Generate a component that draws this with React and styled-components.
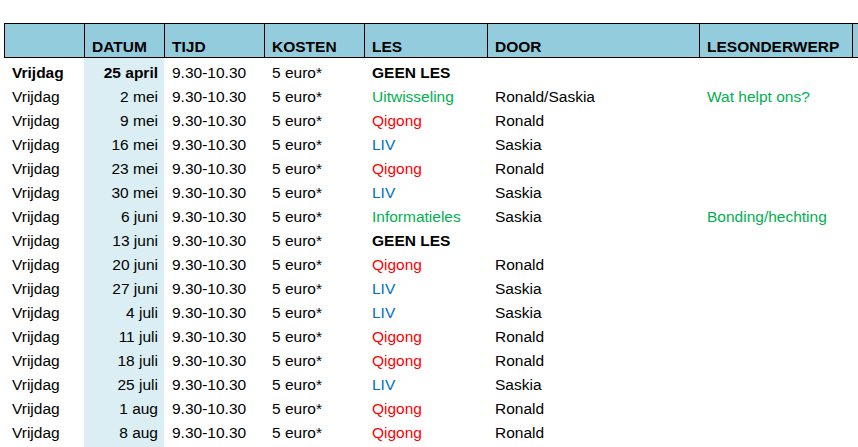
import React from "react";
import styled, { createGlobalStyle } from "styled-components";

const GlobalStyle = createGlobalStyle`
  body {
    margin: 0;
    background: #ffffff;
    font-family: "Liberation Sans", Arial, sans-serif;
    font-size: 15.5px;
    color: #000000;
  }
`;

const COLUMNS = "80px 80px 100px 100px 123px 212px 153px 1fr";

const colors = {
  green: "#00b050",
  red: "#ff0000",
  blue: "#0070c0",
};

const Sheet = styled.div`
  padding: 23px 0 0 4px;
  width: 858px;
  height: 447px;
  box-sizing: border-box;
  overflow: hidden;
`;

const HeaderRow = styled.div`
  display: grid;
  grid-template-columns: ${COLUMNS};
  height: 35px;
  box-sizing: border-box;
  border-top: 1px solid #000;
  border-bottom: 1px solid #000;
  background: #93cddd;
`;

const HeaderCell = styled.div`
  display: flex;
  align-items: flex-end;
  border-left: 1px solid #000;
  padding: 0 0 1px 7px;
  font-weight: bold;
  line-height: 18px;
  white-space: nowrap;
`;

const Row = styled.div`
  display: grid;
  grid-template-columns: ${COLUMNS};
  height: 24px;
`;

const Cell = styled.div`
  display: flex;
  align-items: flex-end;
  justify-content: ${(p) => (p.$right ? "flex-end" : "flex-start")};
  padding: ${(p) => (p.$right ? "0 6px 0 0" : "0 0 0 8px")};
  line-height: 18px;
  white-space: nowrap;
  font-weight: ${(p) => (p.$bold ? "bold" : "normal")};
  color: ${(p) => (p.$color ? colors[p.$color] : "#000")};
  background: ${(p) => (p.$fill ? "#daeef3" : "transparent")};
`;

const lessons = {
  qigong: { text: "Qigong", color: "red", door: "Ronald" },
  liv: { text: "LIV", color: "blue", door: "Saskia" },
};

const rows = [
  { date: "25 april", first: true, les: { text: "GEEN LES", bold: true } },
  {
    date: "2 mei",
    les: { text: "Uitwisseling", color: "green" },
    door: "Ronald/Saskia",
    onderwerp: "Wat helpt ons?",
  },
  { date: "9 mei", les: lessons.qigong },
  { date: "16 mei", les: lessons.liv },
  { date: "23 mei", les: lessons.qigong },
  { date: "30 mei", les: lessons.liv },
  {
    date: "6 juni",
    les: { text: "Informatieles", color: "green" },
    door: "Saskia",
    onderwerp: "Bonding/hechting",
  },
  { date: "13 juni", les: { text: "GEEN LES", bold: true } },
  { date: "20 juni", les: lessons.qigong },
  { date: "27 juni", les: lessons.liv },
  { date: "4 juli", les: lessons.liv },
  { date: "11 juli", les: lessons.qigong },
  { date: "18 juli", les: lessons.qigong },
  { date: "25 juli", les: lessons.liv },
  { date: "1 aug", les: lessons.qigong },
  { date: "8 aug", les: lessons.qigong },
];

export default function App() {
  return (
    <Sheet>
      <GlobalStyle />
      <HeaderRow>
        <HeaderCell />
        <HeaderCell>DATUM</HeaderCell>
        <HeaderCell>TIJD</HeaderCell>
        <HeaderCell>KOSTEN</HeaderCell>
        <HeaderCell>LES</HeaderCell>
        <HeaderCell>DOOR</HeaderCell>
        <HeaderCell>LESONDERWERP</HeaderCell>
        <HeaderCell />
      </HeaderRow>
      {rows.map((row) => (
        <Row key={row.date}>
          <Cell $bold={row.first}>Vrijdag</Cell>
          <Cell $fill $right $bold={row.first}>
            {row.date}
          </Cell>
          <Cell>9.30-10.30</Cell>
          <Cell>5 euro*</Cell>
          <Cell $color={row.les.color} $bold={row.les.bold}>
            {row.les.text}
          </Cell>
          <Cell>{row.door || row.les.door}</Cell>
          <Cell $color="green">{row.onderwerp}</Cell>
          <Cell />
        </Row>
      ))}
      {/* empty spreadsheet row, cut off by the window */}
      <Row>
        <Cell />
        <Cell $fill />
      </Row>
    </Sheet>
  );
}
